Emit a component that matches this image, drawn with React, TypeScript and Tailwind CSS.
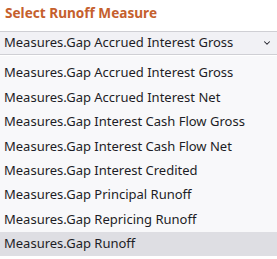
import { ChevronDown } from "lucide-react";

const OPTIONS = [
    "Measures.Gap Accrued Interest Gross",
    "Measures.Gap Accrued Interest Net",
    "Measures.Gap Interest Cash Flow Gross",
    "Measures.Gap Interest Cash Flow Net",
    "Measures.Gap Interest Credited",
    "Measures.Gap Principal Runoff",
    "Measures.Gap Repricing Runoff",
    "Measures.Gap Runoff",
];

export default function App() {
    const selected = OPTIONS[0];
    const hovered = OPTIONS[7];

    return (
        <div className="w-[277px] h-[259px] bg-white overflow-hidden font-['Noto_Sans',sans-serif] text-[#1d1d26]">
            {/* Label */}
            <div className="px-[5px] pt-[3px] h-[31px] text-[13.6px] font-bold text-[#c5602d]">
                Select Runoff Measure
            </div>

            {/* Select box */}
            <div className="h-[24px] flex items-center justify-between border-y border-[#cfcfd4] bg-[#f1f1f5] pl-[4px] pr-[5px] text-[13px]">
                <span>{selected}</span>
                <ChevronDown className="w-[10px] h-[10px]" strokeWidth={2.5} />
            </div>

            {/* Open list */}
            <div className="mt-[1px] bg-[#f8f8fa] pt-[5px] flex flex-col">
                {OPTIONS.map((opt) => (
                    <div
                        key={opt}
                        className={`h-[24.4px] flex items-center px-[4px] text-[13px] ${opt === hovered ? "bg-[#dedee3]" : ""}`}
                    >
                        {opt}
                    </div>
                ))}
            </div>
        </div>
    );
}
